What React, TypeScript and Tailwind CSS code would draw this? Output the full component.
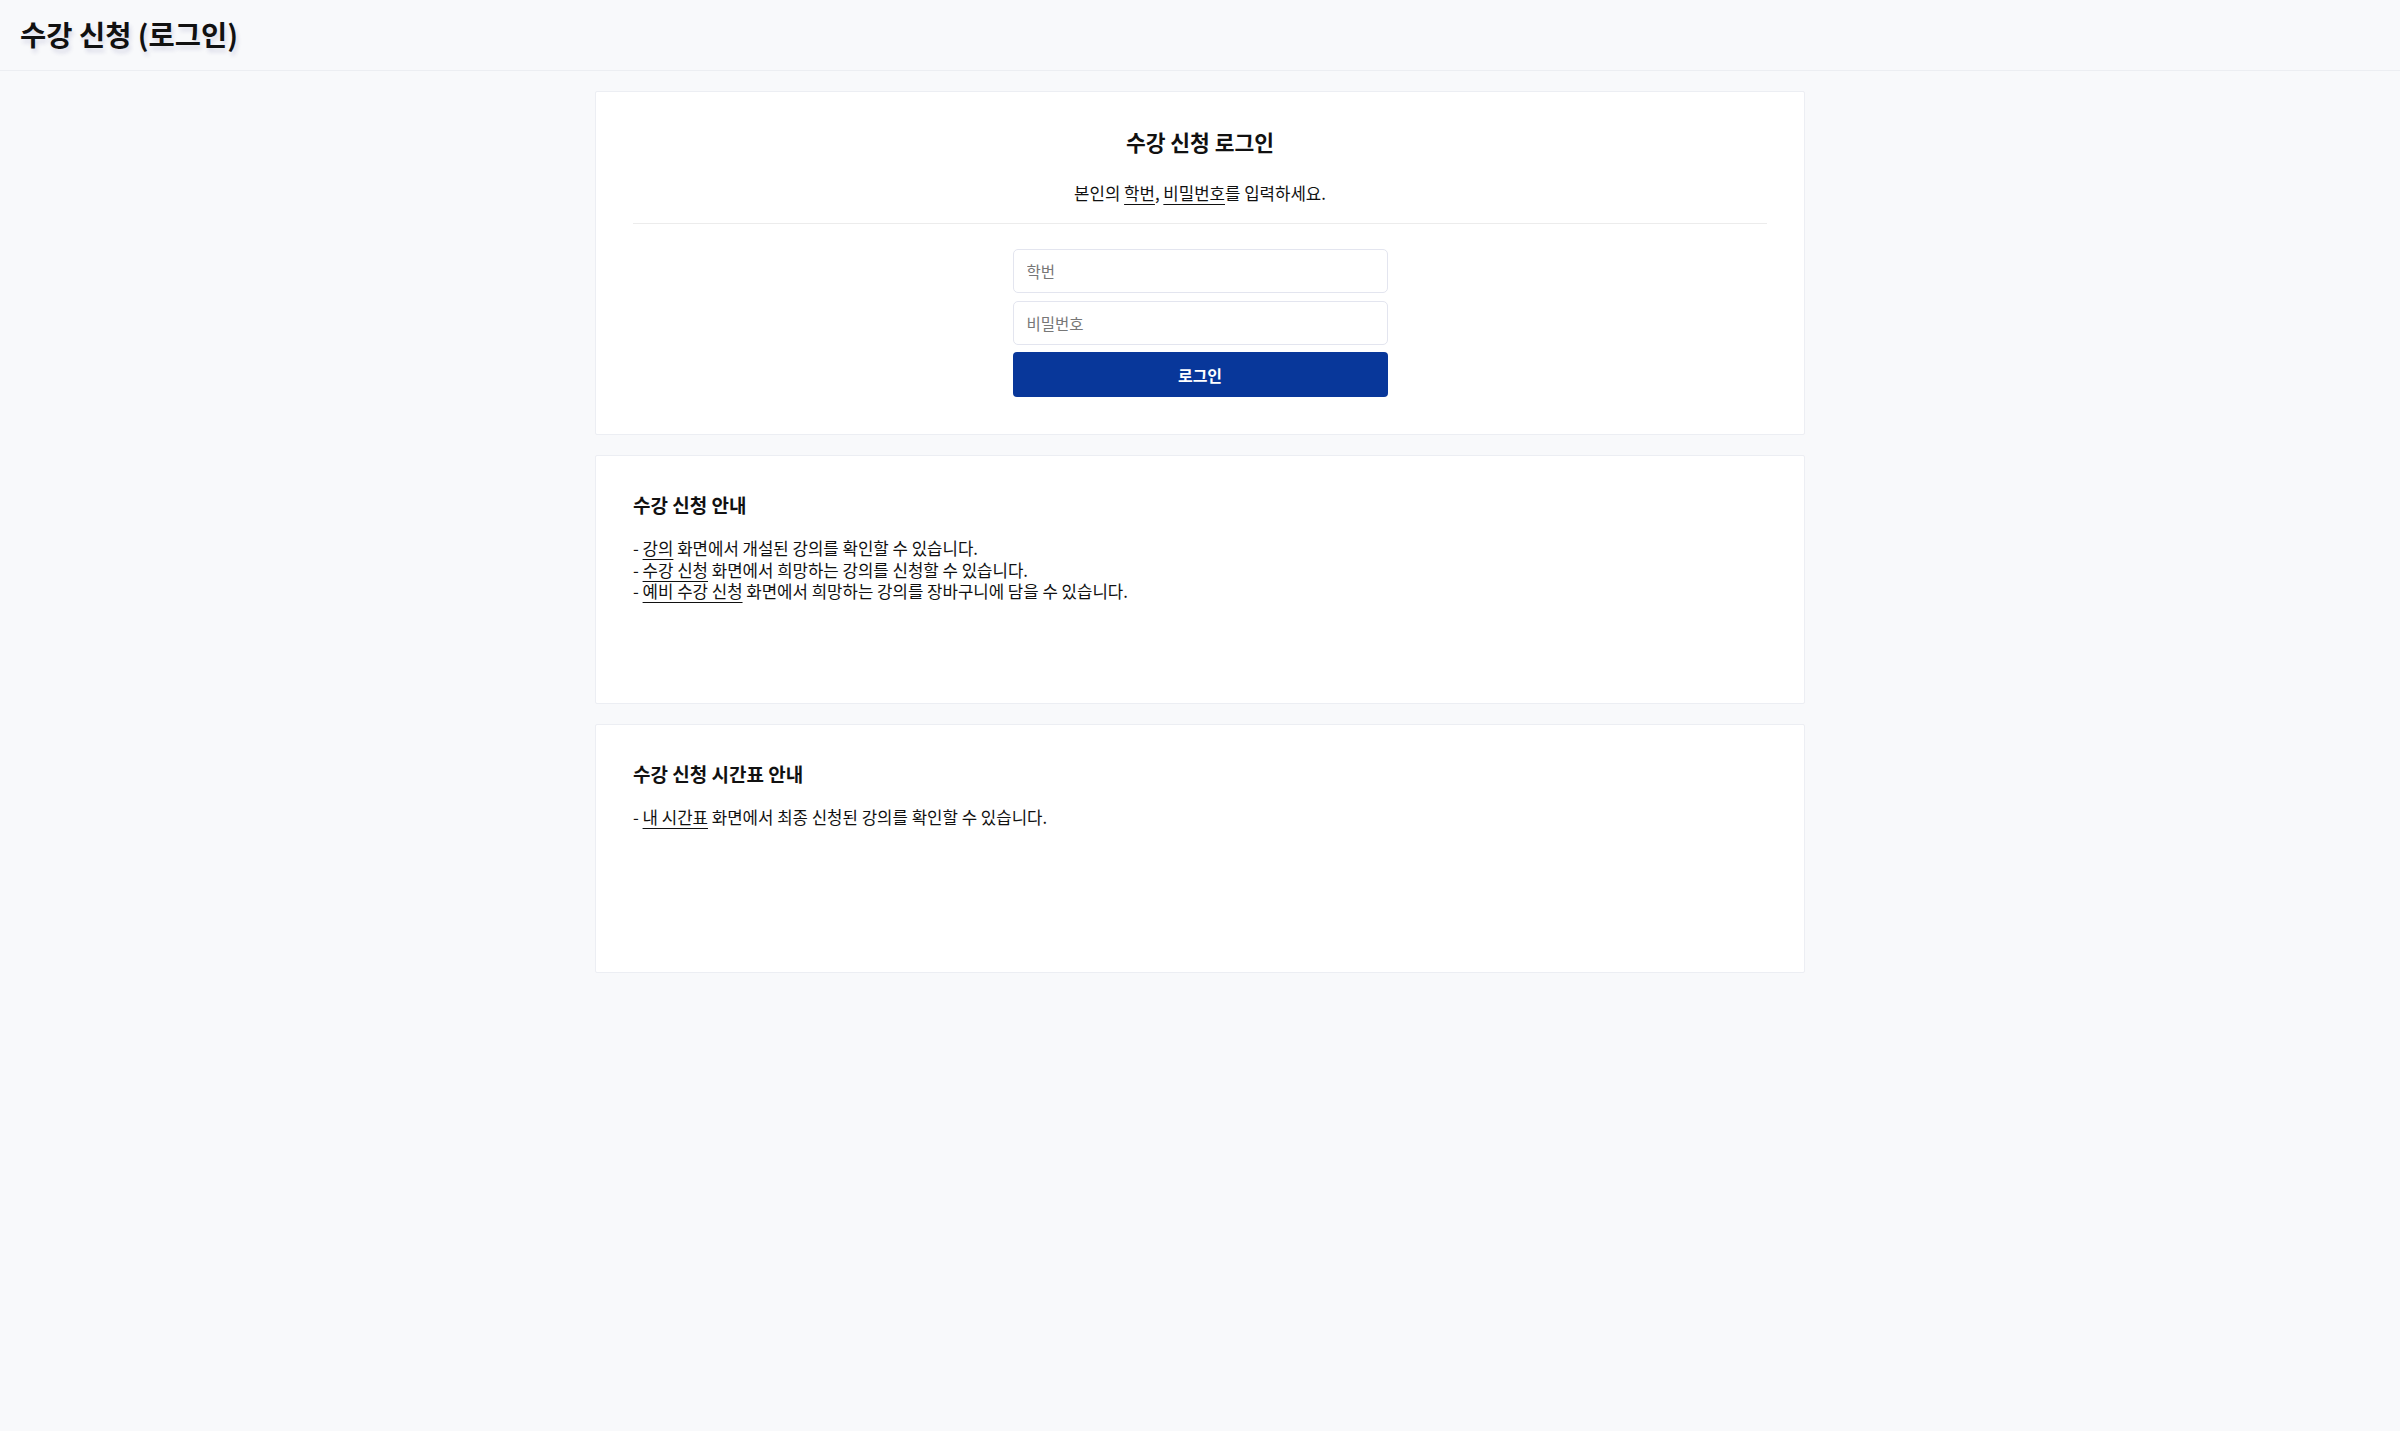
export default function App() {
  return (
    <div className="min-h-screen bg-[#f8f9fb] text-[#111] font-['Noto_Sans_CJK_KR',sans-serif]">
      <header className="h-[71px] border-b border-[#eceef2] flex items-center px-5">
        <h1 className="text-[28.5px] font-bold leading-none pb-[2px] [text-shadow:2px_4px_4px_rgba(40,40,120,0.14)]">
          수강 신청 (로그인)
        </h1>
      </header>

      <main className="flex flex-col items-center gap-5 pt-5 pb-10">
        {/* 로그인 */}
        <section className="w-[1210px] bg-white border border-[#eceef3] rounded-[2px] px-[37px] pt-[36px] pb-[37px]">
          <h2 className="text-center text-[21.5px] leading-[28px] font-bold">수강 신청 로그인</h2>
          <p className="mt-[26px] text-center text-[16.75px] leading-[22px]">
            본인의 <span className="underline underline-offset-4">학번</span>,{" "}
            <span className="underline underline-offset-4">비밀번호</span>를 입력하세요.
          </p>
          <div className="mt-[19px] border-t border-[#ececec]" />
          <form className="mt-[25px] mx-auto w-[375px] flex flex-col" onSubmit={(e) => e.preventDefault()}>
            <input
              type="text"
              placeholder="학번"
              className="h-[44px] px-[13px] border border-[#e3e5ef] rounded-[5px] text-[15.5px] placeholder:text-[#777] outline-none"
            />
            <input
              type="password"
              placeholder="비밀번호"
              className="mt-2 h-[44px] px-[13px] border border-[#e3e5ef] rounded-[5px] text-[15.5px] placeholder:text-[#777] outline-none"
            />
            <button type="submit" className="mt-[7px] h-[45px] rounded-[4px] bg-[#08379a] text-white text-[16px] font-bold">
              로그인
            </button>
          </form>
        </section>

        {/* 안내 */}
        <section className="w-[1210px] h-[249px] bg-white border border-[#eceef3] rounded-[2px] px-[37px] pt-[37px]">
          <h3 className="text-[19px] leading-[24px] font-bold">수강 신청 안내</h3>
          <div className="mt-[21px] text-[16.75px] leading-[21.5px]">
            <p>- <span className="underline underline-offset-4">강의</span> 화면에서 개설된 강의를 확인할 수 있습니다.</p>
            <p>- <span className="underline underline-offset-4">수강 신청</span> 화면에서 희망하는 강의를 신청할 수 있습니다.</p>
            <p>- <span className="underline underline-offset-4">예비 수강 신청</span> 화면에서 희망하는 강의를 장바구니에 담을 수 있습니다.</p>
          </div>
        </section>

        <section className="w-[1210px] h-[249px] bg-white border border-[#eceef3] rounded-[2px] px-[37px] pt-[37px]">
          <h3 className="text-[19px] leading-[24px] font-bold">수강 신청 시간표 안내</h3>
          <div className="mt-[21px] text-[16.75px] leading-[21.5px]">
            <p>- <span className="underline underline-offset-4">내 시간표</span> 화면에서 최종 신청된 강의를 확인할 수 있습니다.</p>
          </div>
        </section>
      </main>
    </div>
  );
}
